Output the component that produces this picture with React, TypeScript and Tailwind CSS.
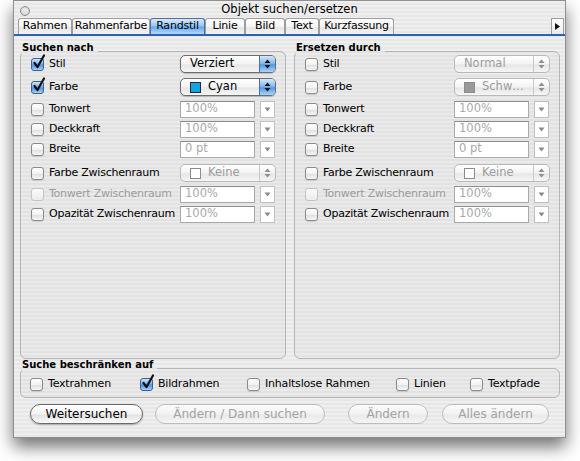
import React from 'react';

// Aqua pinstripe fill used by the window body
const stripes =
  'bg-[image:repeating-linear-gradient(180deg,#efefef_0px,#efefef_2px,#e7e7e7_2px,#e7e7e7_4px)]';

type Ctrl =
  | { kind: 'popup'; text: string; active?: boolean; swatch?: string }
  | { kind: 'field'; text: string };

type Row = { label: string; on?: boolean; dim?: boolean; ctrl: Ctrl; gap: string; h: string };

const searchRows: Row[] = [
  { label: 'Stil', on: true, ctrl: { kind: 'popup', text: 'Verziert', active: true }, gap: '-mt-[4px]', h: 'h-[18px]' },
  { label: 'Farbe', on: true, ctrl: { kind: 'popup', text: 'Cyan', active: true, swatch: 'bg-[#13a4e4]' }, gap: 'mt-[5px]', h: 'h-[18px]' },
  { label: 'Tonwert', ctrl: { kind: 'field', text: '100%' }, gap: 'mt-[4px]', h: 'h-[18px]' },
  { label: 'Deckkraft', ctrl: { kind: 'field', text: '100%' }, gap: 'mt-[2px]', h: 'h-[18px]' },
  { label: 'Breite', ctrl: { kind: 'field', text: '0 pt' }, gap: 'mt-[2px]', h: 'h-[18px]' },
  { label: 'Farbe Zwischenraum', ctrl: { kind: 'popup', text: 'Keine', swatch: 'bg-white' }, gap: 'mt-[5px]', h: 'h-[20px]' },
  { label: 'Tonwert Zwischenraum', dim: true, ctrl: { kind: 'field', text: '100%' }, gap: 'mt-[2px]', h: 'h-[18px]' },
  { label: 'Opazität Zwischenraum', ctrl: { kind: 'field', text: '100%' }, gap: 'mt-[2px]', h: 'h-[18px]' },
];

const replaceRows: Row[] = searchRows.map((r, i) => {
  if (i === 0) return { ...r, on: false, ctrl: { kind: 'popup', text: 'Normal' } };
  if (i === 1) return { ...r, on: false, ctrl: { kind: 'popup', text: 'Schw…', swatch: 'bg-[#9a9a9a]' } };
  return r;
});

const tabs = [
  { name: 'Rahmen', w: 'w-[54px]' },
  { name: 'Rahmenfarbe', w: 'w-[78px]' },
  { name: 'Randstil', w: 'w-[55px]', active: true },
  { name: 'Linie', w: 'w-[40px]' },
  { name: 'Bild', w: 'w-[40px]' },
  { name: 'Text', w: 'w-[34px]' },
  { name: 'Kurzfassung', w: 'w-[75px]' },
];

const limits = [
  { name: 'Textrahmen', w: 'w-[110px]' },
  { name: 'Bildrahmen', w: 'w-[107px]', on: true },
  { name: 'Inhaltslose Rahmen', w: 'w-[149px]' },
  { name: 'Linien', w: 'w-[74px]' },
  { name: 'Textpfade', w: 'w-[80px]' },
];

function Check({ on, dim }: { on?: boolean; dim?: boolean }) {
  return (
    <span
      className={`relative inline-block h-[13px] w-[13px] shrink-0 rounded-[3px] border ${
        on
          ? 'border-[#3f5f8f] bg-[linear-gradient(#cfe4fb,#79b0ee_45%,#4d92e2_55%,#a6d2fb)]'
          : dim
          ? 'border-[#c4c4c4] bg-[linear-gradient(#fbfbfb,#ececec)]'
          : 'border-[#8a8a8a] bg-[linear-gradient(#ffffff,#f2f2f2_50%,#e0e0e0_55%,#f7f7f7)] shadow-[0_1px_1px_rgba(0,0,0,0.12)]'
      }`}
    >
      {on && (
        <svg className="absolute -top-[5px] left-[0px]" width="14" height="16" viewBox="0 0 14 16">
          <path d="M2.5 9 L5.5 13 L12 1.5" fill="none" stroke="#111" strokeWidth="2.2" strokeLinecap="round" strokeLinejoin="round" />
        </svg>
      )}
    </span>
  );
}

function Arrows({ color }: { color: string }) {
  return (
    <svg width="7" height="10" viewBox="0 0 7 10">
      <path d="M3.5 0.5 L6.5 4 H0.5 Z" fill={color} />
      <path d="M3.5 9.5 L6.5 6 H0.5 Z" fill={color} />
    </svg>
  );
}

function Popup({ text, active, swatch }: { text: string; active?: boolean; swatch?: string }) {
  return (
    <div
      className={`flex h-[18px] w-[96px] items-stretch overflow-hidden rounded-[5px] border ${
        active
          ? 'border-[#6d6d6d] shadow-[0_1px_1px_rgba(0,0,0,0.2)]'
          : 'border-[#b9b9b9]'
      } bg-[linear-gradient(#ffffff,#f3f3f3_50%,#e6e6e6_55%,#f6f6f6)]`}
    >
      <div className={`flex flex-1 items-center gap-[7px] pl-[9px] text-[11.5px] ${active ? 'text-black' : 'text-[#9c9c9c]'}`}>
        {swatch && (
          <span className={`h-[11px] w-[11px] border ${active ? 'border-[#2a2a2a]' : 'border-[#8c8c8c]'} ${swatch}`} />
        )}
        <span>{text}</span>
      </div>
      <div
        className={`flex w-[16px] items-center justify-center border-l ${
          active
            ? 'border-[#4d6f9f] bg-[linear-gradient(#d3e7fc,#86bbf1_45%,#5398e6_55%,#a9d3fb)]'
            : 'border-[#c8c8c8]'
        }`}
      >
        <Arrows color={active ? '#111' : '#8e8e8e'} />
      </div>
    </div>
  );
}

function Field({ text }: { text: string }) {
  return (
    <div className="flex items-center">
      <div className="flex h-[17px] w-[75px] items-center border border-[#a9a9a9] border-t-[#8c8c8c] bg-white pl-[4px] text-[11.5px] text-[#a9a9a9]">
        {text}
      </div>
      <div className="ml-[5px] flex h-[17px] w-[15px] items-center justify-center border border-[#c0c0c0] bg-white">
        <svg width="7" height="5" viewBox="0 0 7 5">
          <path d="M0.5 0.5 H6.5 L3.5 4.5 Z" fill="#8a8a8a" />
        </svg>
      </div>
    </div>
  );
}

function Group({ title, rows }: { title: string; rows: Row[] }) {
  return (
    <fieldset className="h-[316px] w-[266px] rounded-[6px] border border-[#b6b6b6] bg-black/[0.02]">
      <legend className="ml-[1px] pr-[4px] pb-[6px] text-[10px] font-bold leading-[10px] text-black">{title}</legend>
      <div className="flex flex-col pl-[10px]">
        {rows.map((r) => (
          <div key={r.label} className={`flex items-center ${r.h} ${r.gap}`}>
            <Check on={r.on} dim={r.dim} />
            <span
              className={`ml-[5px] w-[131px] whitespace-nowrap text-[11px] tracking-[-0.25px] ${
                r.dim ? 'text-[#9c9c9c]' : 'text-black'
              }`}
            >
              {r.label}
            </span>
            {r.ctrl.kind === 'popup' ? (
              <Popup text={r.ctrl.text} active={r.ctrl.active} swatch={r.ctrl.swatch} />
            ) : (
              <Field text={r.ctrl.text} />
            )}
          </div>
        ))}
      </div>
    </fieldset>
  );
}

function PillButton({ label, w, active }: { label: string; w: string; active?: boolean }) {
  return (
    <button
      className={`flex h-[20px] ${w} items-center justify-center rounded-full border text-[12px] ${
        active
          ? 'border-[#6a6a6a] bg-[linear-gradient(#ffffff,#f4f4f4_50%,#e2e2e2_55%,#fafafa)] text-black shadow-[0_1px_2px_rgba(0,0,0,0.3)]'
          : 'border-[#bdbdbd] bg-[linear-gradient(#fbfbfb,#f2f2f2_50%,#e9e9e9_55%,#f5f5f5)] text-[#a3a3a3]'
      }`}
    >
      {label}
    </button>
  );
}

export default function App() {
  return (
    <div className="h-[461px] w-[580px] bg-white pl-[13px] font-['DejaVu_Sans',sans-serif]">
      <div className={`flex h-[438px] w-[553px] flex-col border border-[#8f8f8f] ${stripes} shadow-[0_9px_16px_rgba(0,0,0,0.55)]`}>
        {/* title bar */}
        <div className="grid h-[17px] grid-cols-[1fr_auto_1fr] items-center">
          <div className="pl-[6px] pt-[2px]">
            <div className="h-[10px] w-[10px] rounded-full border border-[#8a8a8a] bg-[linear-gradient(#f6f6f6,#d6d6d6)] shadow-[inset_0_1px_2px_rgba(0,0,0,0.15)]" />
          </div>
          <div className="text-[11.5px] text-black">Objekt suchen/ersetzen</div>
          <div />
        </div>

        {/* tab strip */}
        <div className="flex h-[16px] items-end pl-[4px]">
          {tabs.map((t) => (
            <div
              key={t.name}
              className={`flex h-[16px] ${t.w} items-center justify-center rounded-t-[3px] border border-b-0 text-[11px] tracking-[-0.2px] ${
                t.active
                  ? 'border-[#4d6f9f] bg-[linear-gradient(#d8eafc,#99c6f3_45%,#6aaaee_55%,#b2d9fb)]'
                  : 'border-[#9d9d9d] bg-[linear-gradient(#ffffff,#f5f5f5_50%,#e6e6e6_55%,#f3f3f3)]'
              }`}
            >
              {t.name}
            </div>
          ))}
          <div className="flex-1" />
          <div className="mr-[1px] flex h-[16px] w-[13px] items-center justify-center border border-b-0 border-[#9d9d9d] bg-[linear-gradient(#ffffff,#ececec)]">
            <svg width="5" height="7" viewBox="0 0 5 7">
              <path d="M0 0 L5 3.5 L0 7 Z" fill="#111" />
            </svg>
          </div>
        </div>
        <div className="h-[2px] bg-[#2c62b0]" />

        {/* body */}
        <div className="flex flex-col pl-[6px] pr-[5px]">
          <div className="mt-[7px] flex gap-[8px]">
            <Group title="Suchen nach" rows={searchRows} />
            <Group title="Ersetzen durch" rows={replaceRows} />
          </div>

          <fieldset className="mt-[1px] h-[38px] w-[540px] rounded-[6px] border border-[#b6b6b6] bg-black/[0.02]">
            <legend className="ml-[1px] pr-[4px] pb-[6px] text-[10px] font-bold leading-[10px] text-black">
              Suche beschränken auf
            </legend>
            <div className="flex h-[16px] items-center pl-[9px]">
              {limits.map((l) => (
                <div key={l.name} className={`flex items-center ${l.w}`}>
                  <Check on={l.on} />
                  <span className="ml-[5px] whitespace-nowrap text-[11px] tracking-[-0.2px] text-black">{l.name}</span>
                </div>
              ))}
            </div>
          </fieldset>

          <div className="mt-[6px] flex items-center pl-[10px]">
            <PillButton label="Weitersuchen" w="w-[113px]" active />
            <div className="ml-[12px]">
              <PillButton label="Ändern / Dann suchen" w="w-[170px]" />
            </div>
            <div className="ml-[23px]">
              <PillButton label="Ändern" w="w-[80px]" />
            </div>
            <div className="ml-[14px]">
              <PillButton label="Alles ändern" w="w-[107px]" />
            </div>
          </div>
        </div>
      </div>
    </div>
  );
}
